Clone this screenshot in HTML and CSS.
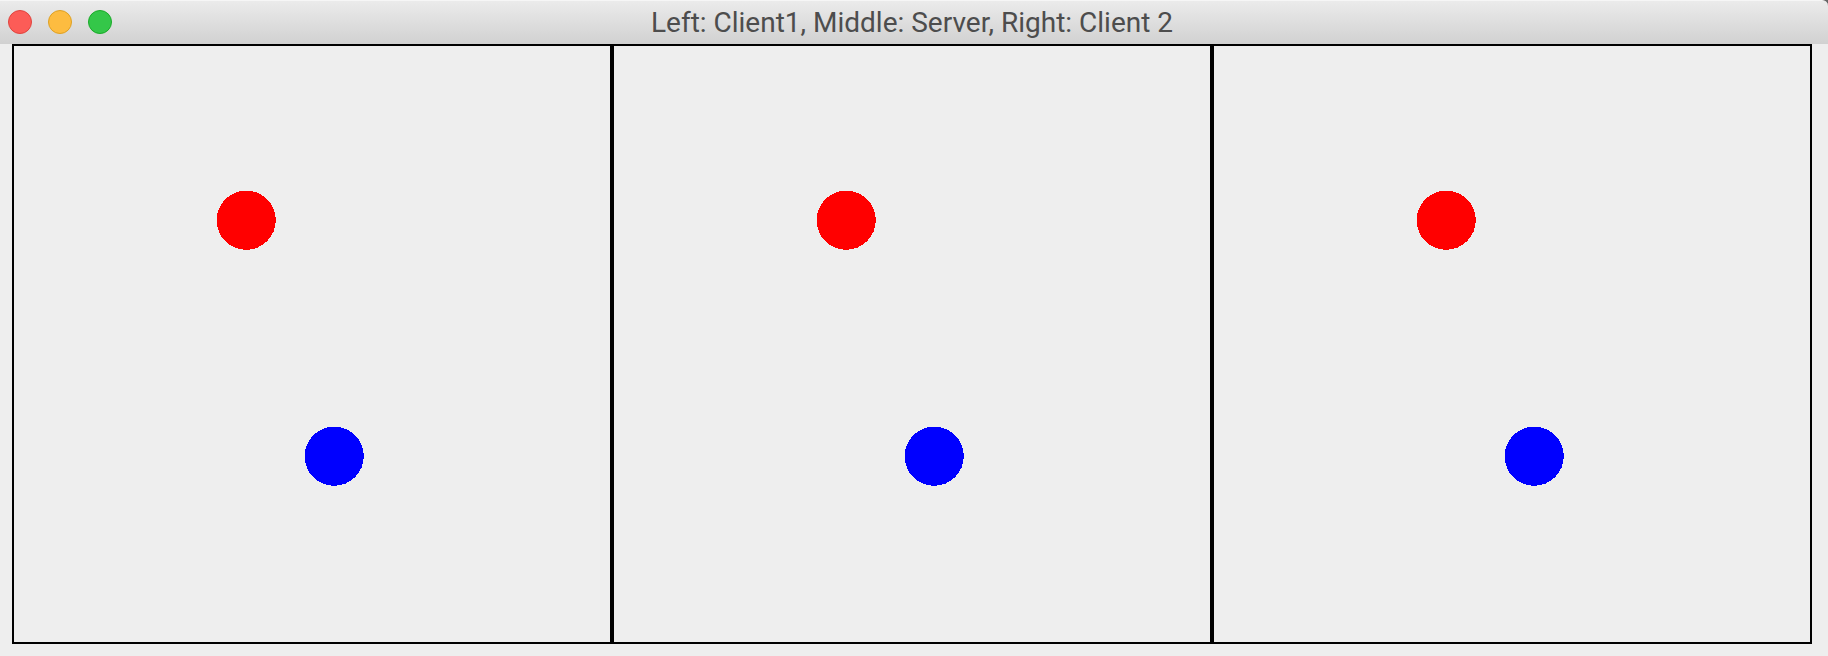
FILE: index.html
```html
<!DOCTYPE html>
<html lang="en">
<head>
    <meta charset="UTF-8">
    <title>Left: Client1, Middle: Server, Right: Client 2</title>
    <link rel="stylesheet" href="styles.css">
</head>
<body>
<div class="window">
    <header class="titlebar">
        <div class="lights">
            <span class="light light-close"></span>
            <span class="light light-min"></span>
            <span class="light light-max"></span>
        </div>
        <h1 class="title">Left: Client1, Middle: Server, Right: Client 2</h1>
    </header>

    <main class="panels">
        <svg class="panel" viewBox="2 2 596 596">
            <circle class="ball-red" cx="234.2" cy="176.2" r="29.6"/>
            <circle class="ball-blue" cx="322.2" cy="412.2" r="29.6"/>
        </svg>
        <svg class="panel" viewBox="2 2 596 596">
            <circle class="ball-red" cx="234.2" cy="176.2" r="29.6"/>
            <circle class="ball-blue" cx="322.2" cy="412.2" r="29.6"/>
        </svg>
        <svg class="panel" viewBox="2 2 596 596">
            <circle class="ball-red" cx="234.2" cy="176.2" r="29.6"/>
            <circle class="ball-blue" cx="322.2" cy="412.2" r="29.6"/>
        </svg>
    </main>
</div>
</body>
</html>
```

FILE: styles.css
```css
html, body {
    margin: 0;
    padding: 0;
    background-color: #eeeeee;
}

.window {
    width: 1828px;
    height: 656px;
    overflow: hidden;
    /* dark sliver shows behind the rounded top right corner */
    background: linear-gradient(to bottom, #666666 6px, #eeeeee 6px);
}

.titlebar {
    position: relative;
    height: 44px;
    box-sizing: border-box;
    display: flex;
    align-items: center;
    justify-content: center;
    padding-right: 4px;
    background: linear-gradient(to bottom, #ebebeb, #d1d1d1);
    border-top: 1px solid #f6f6f6;
    border-radius: 0 6px 0 0;
}

.lights {
    position: absolute;
    left: 8px;
    top: 9px;
    display: flex;
    gap: 16px;
}

.light {
    width: 24px;
    height: 24px;
    box-sizing: border-box;
    border-radius: 50%;
    border: 1px solid;
}

.light-close {
    background-color: #fc5c57;
    border-color: #e0443e;
}

.light-min {
    background-color: #fdbc40;
    border-color: #dea123;
}

.light-max {
    background-color: #34c749;
    border-color: #1aab29;
}

.title {
    margin: 0;
    font-family: Roboto, "Liberation Sans", sans-serif;
    font-size: 28px;
    font-weight: 400;
    color: #4d4d4d;
}

.panels {
    display: flex;
    margin-left: 12px;
}

.panel {
    width: 600px;
    height: 600px;
    box-sizing: border-box;
    flex: none;
    border: 2px solid #000000;
    background-color: #eeeeee;
}

.panel circle {
    shape-rendering: crispEdges;
}

.ball-red {
    fill: #ff0000;
}

.ball-blue {
    fill: #0000ff;
}
```
